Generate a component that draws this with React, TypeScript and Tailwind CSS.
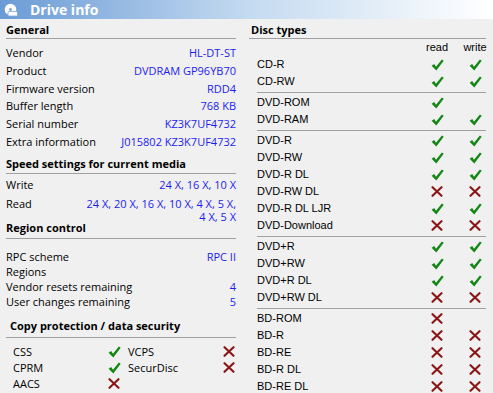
import React from "react";

const Check = () => (
  <svg width="13" height="12" viewBox="0 0 13 12">
    <path d="M0.6 6.7 L3.2 5.1 L5 7.8 L10.9 0.4 L12.7 1.8 L5.3 11.5 Z" fill="#138613" />
  </svg>
);

const Cross = () => (
  <svg width="12" height="11" viewBox="0 0 12 11">
    <path d="M1.5 1.2 L10.5 9.8 M10.5 1.2 L1.5 9.8" stroke="#8a1515" strokeWidth="2.1" strokeLinecap="round" />
  </svg>
);

type V = "y" | "n" | null;

const groups: [string, V, V][][] = [
  [
    ["CD-R", "y", "y"],
    ["CD-RW", "y", "y"],
  ],
  [
    ["DVD-ROM", "y", null],
    ["DVD-RAM", "y", "y"],
  ],
  [
    ["DVD-R", "y", "y"],
    ["DVD-RW", "y", "y"],
    ["DVD-R DL", "y", "y"],
    ["DVD-RW DL", "n", "n"],
    ["DVD-R DL LJR", "y", "y"],
    ["DVD-Download", "n", "n"],
  ],
  [
    ["DVD+R", "y", "y"],
    ["DVD+RW", "y", "y"],
    ["DVD+R DL", "y", "y"],
    ["DVD+RW DL", "n", "n"],
  ],
  [
    ["BD-ROM", "n", null],
    ["BD-R", "n", "n"],
    ["BD-RE", "n", "n"],
    ["BD-R DL", "n", "n"],
    ["BD-RE DL", "n", "n"],
  ],
];

const Mark = ({ v }: { v: V }) => (v === "y" ? <Check /> : v === "n" ? <Cross /> : null);

const Row = ({ label, value, h }: { label: string; value: string; h: string }) => (
  <div className={`flex justify-between whitespace-nowrap ${h}`}>
    <span>{label}</span>
    <span className="text-[#1c1cf0]">{value}</span>
  </div>
);

export default function App() {
  return (
    <div className="w-[493px] h-[393px] overflow-hidden bg-[#f0f0f0] text-black">
      <div className="h-[19px] flex items-center bg-gradient-to-r from-[#6b9bd5] via-[#c3daf0] to-white">
        <svg width="14" height="14" viewBox="0 0 14 14" className="ml-[4px]">
          <circle cx="6.5" cy="6.5" r="5.8" fill="white" />
          <circle cx="6.5" cy="6.5" r="1.4" fill="#7aa6dc" />
          <rect x="4" y="8.5" width="9.5" height="4.5" rx="0.8" fill="white" stroke="#7aa6dc" strokeWidth="0.8" />
        </svg>
        <span className="ml-[12px] text-white font-bold text-[14px] leading-[19px]" style={{ fontFamily: '"Open Sans", sans-serif' }}>
          Drive info
        </span>
      </div>
      <div className="flex">
        <div className="w-[241px] pl-[6px] pr-[5px] text-[11px]" style={{ fontFamily: '"Open Sans", sans-serif' }}>
          <div className="h-[20px] pt-[3px] border-b border-[#a0a0a0] leading-[16px] font-bold">General</div>
          <div className="mt-[5px] leading-[17.8px]">
            <Row label="Vendor" value="HL-DT-ST" h="h-[17.8px]" />
            <Row label="Product" value="DVDRAM GP96YB70" h="h-[17.8px]" />
            <Row label="Firmware version" value="RDD4" h="h-[17.8px]" />
            <Row label="Buffer length" value="768 KB" h="h-[17.8px]" />
            <Row label="Serial number" value="KZ3K7UF4732" h="h-[17.8px]" />
            <Row label="Extra information" value="J015802 KZ3K7UF4732" h="h-[17.8px]" />
          </div>
          <div className="h-[23px] pt-[5px] border-b border-[#a0a0a0] leading-[16px] font-bold">Speed settings for current media</div>
          <div className="mt-[2px] leading-[18px]">
            <Row label="Write" value="24 X, 16 X, 10 X" h="h-[18px]" />
          </div>
          <div className="flex justify-between pt-[3px] leading-[13px]">
            <span>Read</span>
            <span className="text-right text-[#1c1cf0]">
              24 X, 20 X, 16 X, 10 X, 4 X, 5 X,
              <br />4 X, 5 X
            </span>
          </div>
          <div className="h-[16px] border-b border-[#a0a0a0] leading-[9px] font-bold whitespace-nowrap">Region control</div>
          <div className="mt-[10px] leading-[15px]">
            <Row label="RPC scheme" value="RPC II" h="h-[15px]" />
            <Row label="Regions" value="" h="h-[15px]" />
            <Row label="Vendor resets remaining" value="4" h="h-[15px]" />
            <Row label="User changes remaining" value="5" h="h-[15px]" />
          </div>
          <div className="h-[29px] pt-[9px] pl-[4px] border-b border-[#a0a0a0] leading-[16px] font-bold whitespace-nowrap">
            Copy protection / data security
          </div>
          <div className="mt-[6px] pl-[7px] leading-[16px]">
            {[
              ["CSS", "y", "VCPS", "n"],
              ["CPRM", "y", "SecurDisc", "n"],
              ["AACS", "n", "", null],
            ].map(([a, av, b, bv]) => (
              <div key={a as string} className="flex h-[16px] items-center whitespace-nowrap">
                <span className="w-[95px]">{a}</span>
                <span className="w-[14px] flex justify-center">
                  <Mark v={av as V} />
                </span>
                <span className="w-[7px]" />
                <span className="w-[95px]">{b}</span>
                <span className="w-[14px] flex justify-center">
                  <Mark v={bv as V} />
                </span>
              </div>
            ))}
          </div>
        </div>
        <div className="flex-1 pl-[8px] pr-[7px] text-[11px]" style={{ fontFamily: '"Liberation Sans", Arial, sans-serif' }}>
          <div
            className="h-[20px] pt-[3px] pl-[2px] border-b border-[#a0a0a0] leading-[16px] font-bold text-[11px]"
            style={{ fontFamily: '"Open Sans", sans-serif' }}
          >
            Disc types
          </div>
          <div className="mt-[1px] h-[14px] flex leading-[14px]">
            <span className="flex-1" />
            <span className="w-[54px] flex justify-center">read</span>
            <span className="w-[22px] flex justify-center whitespace-nowrap">write</span>
          </div>
          <div className="mt-[2px]">
            {groups.map((g, gi) => (
              <div key={gi}>
                {gi > 0 && <div className="ml-[8px] mt-[2px] mb-[1px] h-px bg-[#a0a0a0]" />}
                {g.map(([name, r, w]) => (
                  <div key={name} className="flex h-[17px] items-center leading-[17px]">
                    <span className="flex-1 pl-[8px] whitespace-nowrap">{name}</span>
                    <span className="w-[54px] flex justify-center">
                      <Mark v={r} />
                    </span>
                    <span className="w-[22px] flex justify-center">
                      <Mark v={w} />
                    </span>
                  </div>
                ))}
              </div>
            ))}
          </div>
        </div>
      </div>
    </div>
  );
}
